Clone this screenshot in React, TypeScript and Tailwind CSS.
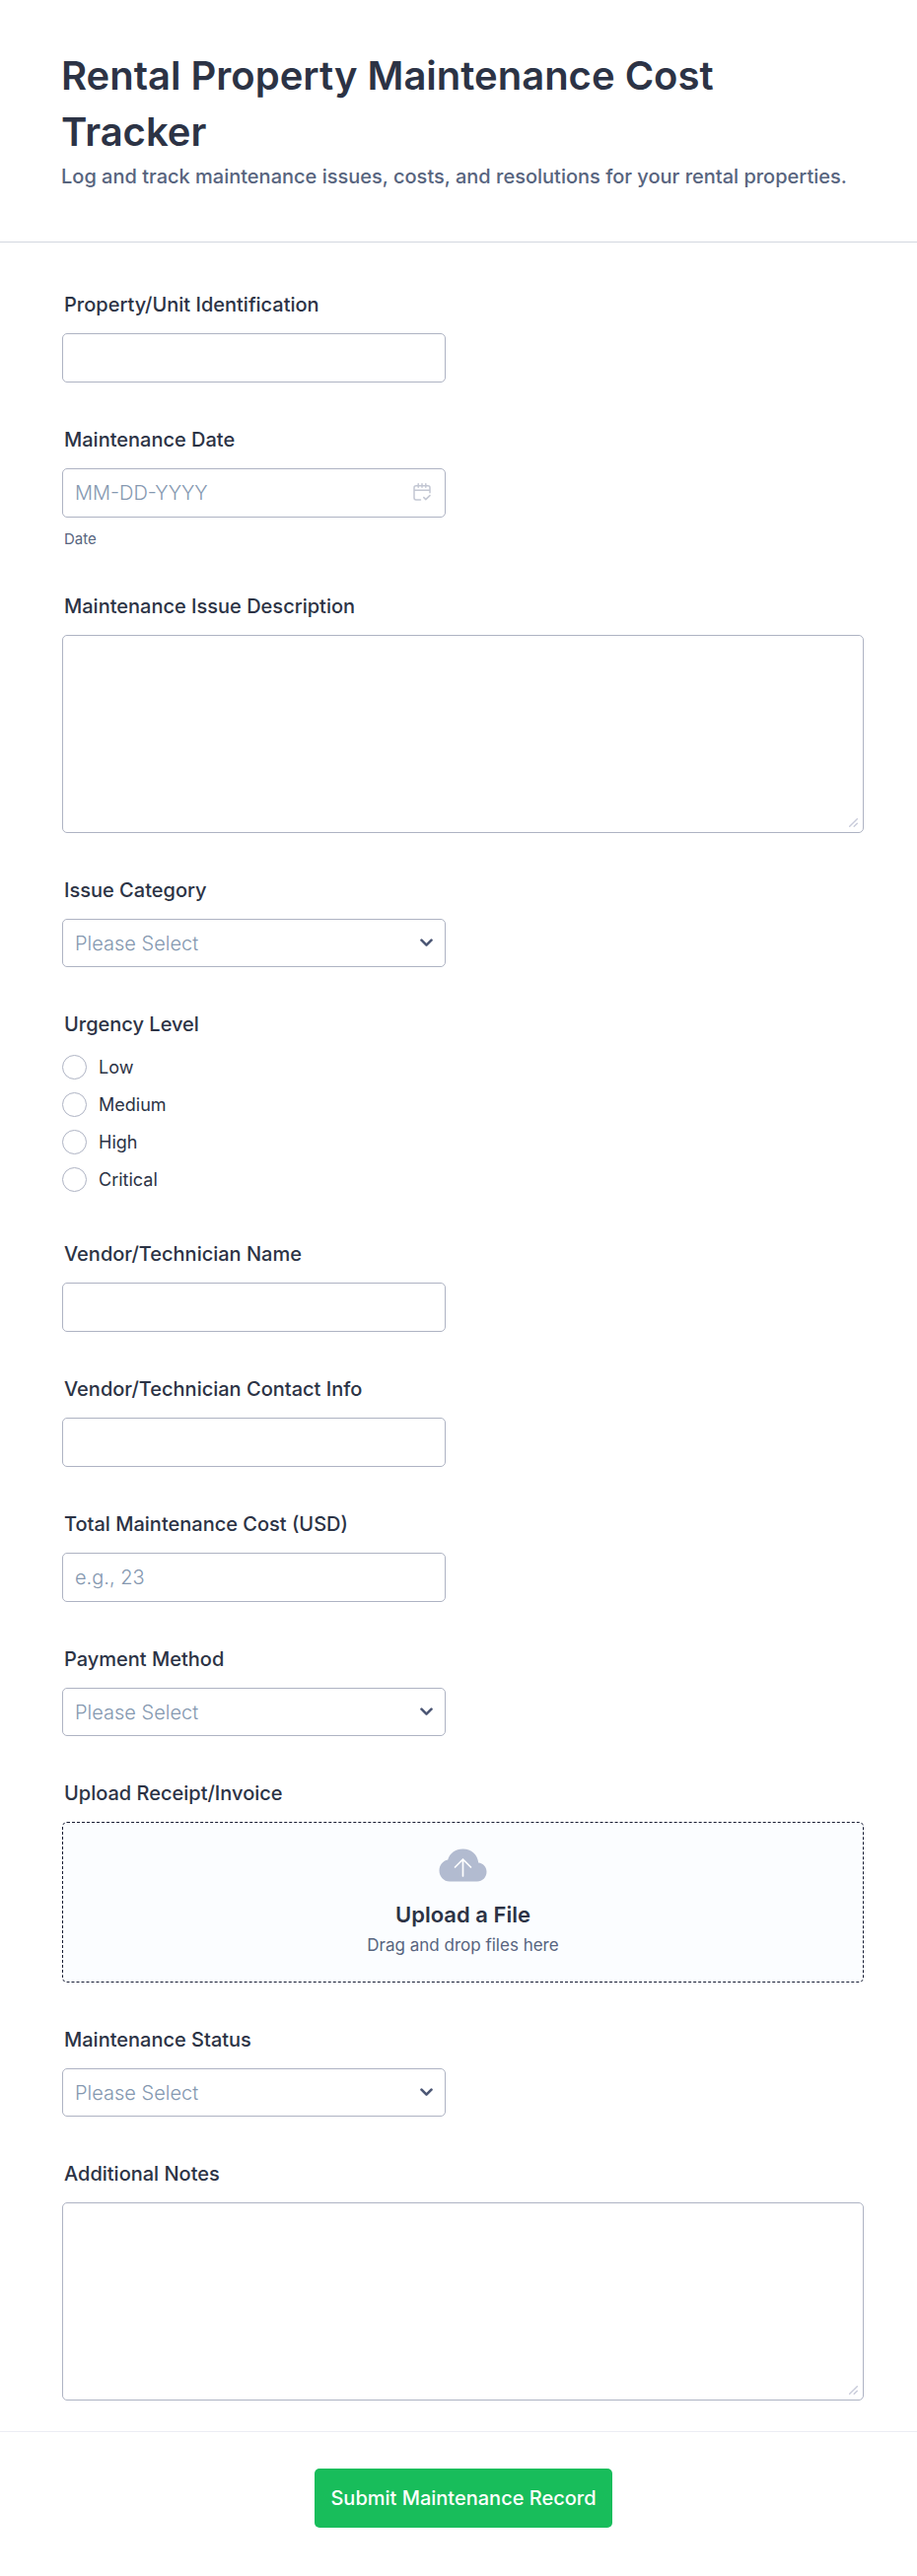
import { useState } from 'react';
import type { ReactNode } from 'react';

interface FieldProps {
  id: string;
  label: string;
  children: ReactNode;
}

const urgencyLevels = ['Low', 'Medium', 'High', 'Critical'];
const issueCategories = ['Plumbing', 'Electrical', 'HVAC', 'Appliance', 'Structural', 'Other'];
const paymentMethods = ['Cash', 'Check', 'Credit Card', 'Bank Transfer'];
const statuses = ['Pending', 'In Progress', 'Completed'];

function Field({ id, label, children }: FieldProps) {
  return (
    <div>
      <label htmlFor={id} className="block pl-[2px] mb-[17px] text-xl leading-6 font-medium">
        {label}
      </label>
      {children}
    </div>
  );
}

function TextInput({ id, placeholder }: { id: string; placeholder?: string }) {
  return (
    <input
      id={id}
      type="text"
      placeholder={placeholder}
      className="block w-full max-w-[389px] h-[50px] px-3 rounded-[5px] border border-[#aeb3c3] bg-white text-xl font-light placeholder:text-[#8598b0]"
    />
  );
}

function SelectInput({ id, options }: { id: string; options: string[] }) {
  const [value, setValue] = useState('');

  return (
    <div className="relative max-w-[389px]">
      <select
        id={id}
        value={value}
        onChange={(e) => setValue(e.target.value)}
        className={`block w-full h-[49px] pl-3 pr-10 appearance-none rounded-[5px] border border-[#aeb3c3] bg-white text-xl font-light ${
          value ? 'text-[#2c3345]' : 'text-[#8598b0]'
        }`}
      >
        <option value="">Please Select</option>
        {options.map((option) => (
          <option key={option}>{option}</option>
        ))}
      </select>
      <svg
        width="13"
        height="9"
        viewBox="0 0 13 9"
        fill="none"
        className="absolute right-[13px] top-5 pointer-events-none"
      >
        <path
          d="M1.5 1.7 L6.5 6.7 L11.5 1.7"
          stroke="#4c5775"
          strokeWidth="2.6"
          strokeLinecap="round"
          strokeLinejoin="round"
        />
      </svg>
    </div>
  );
}

function TextArea({ id }: { id: string }) {
  return (
    <div className="relative">
      <textarea
        id={id}
        className="block w-full h-[201px] px-3 py-3 resize-none rounded-[5px] border border-[#aeb3c3] bg-white text-xl font-light"
      />
      <svg
        width="9"
        height="9"
        viewBox="0 0 9 9"
        fill="none"
        stroke="#c8cbda"
        strokeWidth="1.4"
        strokeLinecap="round"
        className="absolute right-[6px] bottom-[6px] pointer-events-none"
      >
        <path d="M0.7 8.3 L8.3 0.7 M5.2 8.3 L8.3 5.2" />
      </svg>
    </div>
  );
}

export default function App() {
  return (
    <form
      onSubmit={(e) => e.preventDefault()}
      className="bg-white text-[#2c3345] font-[Inter,'Liberation_Sans',sans-serif]"
    >
      <header className="pl-[62px] pr-[54px] pt-12 pb-[54px] border-b border-[#d3d7e0]">
        <h1 className="text-[40px] leading-[57px] font-semibold">
          Rental Property Maintenance Cost Tracker
        </h1>
        <p className="mt-[5px] text-xl leading-6 font-medium text-[#57647e]">
          Log and track maintenance issues, costs, and resolutions for your rental properties.
        </p>
      </header>

      <div className="flex flex-col gap-[46px] pl-[63px] pr-[54px] pt-[51px] pb-[31px]">
        <Field id="property" label="Property/Unit Identification">
          <TextInput id="property" />
        </Field>

        <Field id="date" label="Maintenance Date">
          <div className="relative max-w-[389px]">
            <TextInput id="date" placeholder="MM-DD-YYYY" />
            <svg
              width="18"
              height="18"
              viewBox="0 0 18 18"
              fill="none"
              stroke="#c3c7d3"
              strokeWidth="1.5"
              strokeLinecap="round"
              strokeLinejoin="round"
              className="absolute right-[15px] top-[15px] pointer-events-none"
            >
              <path d="M7.5 17 H3 Q1 17 1 15 V4.7 Q1 2.7 3 2.7 H15 Q17 2.7 17 4.7 V9.8 M1 7.2 H17 M5.2 0.8 V4.2 M9 0.8 V4.2 M12.8 0.8 V4.2 M10.8 14.6 L12.8 16.6 L17 12.6" />
            </svg>
          </div>
          <p className="pl-[2px] mt-3 text-[15px] leading-5 text-[#57647e]">Date</p>
        </Field>

        <Field id="description" label="Maintenance Issue Description">
          <TextArea id="description" />
        </Field>

        <Field id="category" label="Issue Category">
          <SelectInput id="category" options={issueCategories} />
        </Field>

        <fieldset className="pb-[5px]">
          <legend className="pl-[2px] mb-[18px] text-xl leading-[25px] font-medium">
            Urgency Level
          </legend>
          <div className="flex flex-col items-start gap-[13px]">
            {urgencyLevels.map((level) => (
              <label key={level} className="flex items-center gap-3 text-[18px] leading-6">
                <input
                  type="radio"
                  name="urgency"
                  value={level}
                  className="w-[25px] h-[25px] appearance-none rounded-full border border-[#aeb3c3] bg-white checked:border-8 checked:border-[#2c3345]"
                />
                {level}
              </label>
            ))}
          </div>
        </fieldset>

        <Field id="vendor-name" label="Vendor/Technician Name">
          <TextInput id="vendor-name" />
        </Field>

        <Field id="vendor-contact" label="Vendor/Technician Contact Info">
          <TextInput id="vendor-contact" />
        </Field>

        <Field id="cost" label="Total Maintenance Cost (USD)">
          <TextInput id="cost" placeholder="e.g., 23" />
        </Field>

        <Field id="payment" label="Payment Method">
          <SelectInput id="payment" options={paymentMethods} />
        </Field>

        <Field id="receipt" label="Upload Receipt/Invoice">
          <label
            htmlFor="receipt"
            className="relative flex flex-col items-center h-[163px] pt-[26px] rounded-[5px] border border-dashed border-[#171c33] bg-[#fbfdff] cursor-pointer"
          >
            <svg width="49" height="34" viewBox="0 0 49 34" fill="none">
              <path
                d="M11 33.5 C5 33.5 0.5 28.5 0.5 22.5 C0.5 17 4.2 12.6 9.2 11.6 C10.8 5 17 0.5 24.5 0.5 C33 0.5 39.6 6.5 40.2 14.6 C45 15 48.5 19 48.5 23.8 C48.5 29.2 44.3 33.5 39 33.5 Z"
                fill="#b2bbd0"
              />
              <path
                d="M24.5 28 V11 M16.5 19 L24.5 11 L32.5 19"
                stroke="#fff"
                strokeWidth="1.7"
                strokeLinecap="round"
                strokeLinejoin="round"
              />
            </svg>
            <span className="mt-[18px] text-[22px] leading-[30px] font-semibold">Upload a File</span>
            <span className="mt-1 text-[17px] leading-6 text-[#57647e]">Drag and drop files here</span>
            <input id="receipt" type="file" className="sr-only" />
          </label>
        </Field>

        <Field id="status" label="Maintenance Status">
          <SelectInput id="status" options={statuses} />
        </Field>

        <Field id="notes" label="Additional Notes">
          <TextArea id="notes" />
        </Field>
      </div>

      <footer className="flex justify-center pl-[10px] pt-[37px] pb-[49px] border-t border-[#ecedf4]">
        <button
          type="submit"
          className="h-[60px] px-4 rounded-[5px] bg-[#18bd5b] text-xl font-medium text-white"
        >
          Submit Maintenance Record
        </button>
      </footer>
    </form>
  );
}
